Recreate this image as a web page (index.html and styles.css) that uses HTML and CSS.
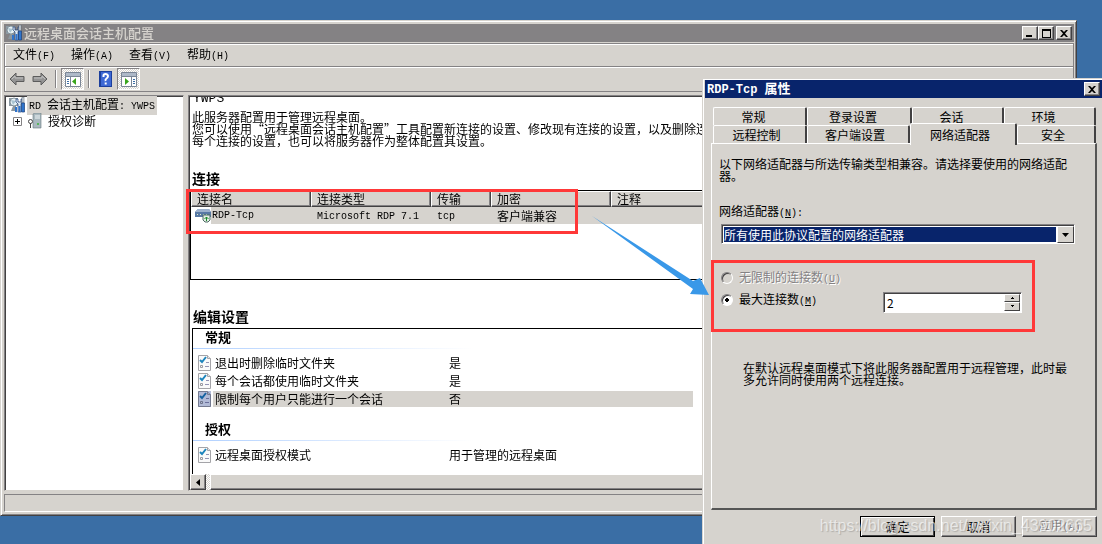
FILE: index.html
```html
<!DOCTYPE html>
<html lang="zh-CN">
<head>
    <meta charset="UTF-8">
    <meta name="viewport" content="width=device-width, initial-scale=1.0">
    <title>远程桌面会话主机配置</title>
    <link rel="stylesheet" href="styles.css">
</head>
<body>

    <!-- shared icons -->
    <svg class="defs" width="0" height="0">
        <symbol id="icon-host" viewBox="0 0 16 16">
            <path d="M0 1h9v8H0z" fill="#8d9aa3"/>
            <circle cx="5" cy="5" r="4" fill="#e6f0f4" stroke="#6f7f89" stroke-width=".8"/>
            <path d="M2 3l5 1-3 4z" fill="#a9c4d2"/>
            <path d="M4 9l-2 5h5V9z" fill="#8c979f"/>
            <path d="M7 2v3l2 2v8h3V7l1-2V2h-1v3H9V2z" fill="#dfe9f2" stroke="#1c4178" stroke-width=".7"/>
            <path d="M13 0h2v6h-2z" fill="#d7dde2" stroke="#4a5a68" stroke-width=".5"/>
            <path d="M12.500 6h3v9h-3z" fill="#2f74cc" stroke="#1c4178" stroke-width=".7"/>
            <path d="M6 10h2v5H6zM9.500 9h2v6h-2z" fill="#2f74cc"/>
        </symbol>
        <symbol id="icon-check" viewBox="0 0 13 16">
            <path d="M.5 .5h9l3 3v12H.5z" fill="#fafafa" stroke="#a4a4a8"/>
            <path d="M9.500 .5v3h3" fill="#e4e4e8" stroke="#a4a4a8"/>
            <path d="M2 5l2 2 4-5" fill="none" stroke="#1c84bc" stroke-width="2"/>
            <path d="M8 7.500h3M7 11.500h4" stroke="#9494b4"/>
            <path d="M2.500 10.500h2v2h-2z" fill="none" stroke="#9a9aa0"/>
        </symbol>
        <symbol id="icon-arrow" viewBox="0 0 16 14">
            <path d="M1 7l6-6v3.500h8v5H7V13z" fill="#949494" stroke="#5c5c5c"/>
            <path d="M3 7l3-3v2h8" fill="none" stroke="#c0c0c0"/>
        </symbol>
        <symbol id="icon-close" viewBox="0 0 8 7">
            <path d="M0 0h2l2 2 2-2h2L5 3.500 8 7H6L4 5 2 7H0l3-3.500z"/>
        </symbol>
    </svg>

    <main class="desktop">
        <section class="window">
            <header class="titlebar inactive">
                <svg class="icon16"><use href="#icon-host"/></svg>
                <h1>远程桌面会话主机配置</h1>
                <div class="caption-buttons">
                    <button class="caption" aria-label="最小化"><svg width="8" height="7"><path d="M0 5h6v2H0z"/></svg></button>
                    <button class="caption" aria-label="最大化"><svg width="9" height="9"><path d="M0 0h9v9H0zM1 2v6h7V2z" fill-rule="evenodd"/></svg></button>
                    <button class="caption apart" aria-label="关闭"><svg width="8" height="7"><use href="#icon-close"/></svg></button>
                </div>
            </header>

            <nav class="menubar">
                <button>文件<span class="en">(F)</span></button>
                <button>操作<span class="en">(A)</span></button>
                <button>查看<span class="en">(V)</span></button>
                <button>帮助<span class="en">(H)</span></button>
            </nav>

            <div class="toolbar">
                <button aria-label="后退"><svg width="16" height="14"><use href="#icon-arrow"/></svg></button>
                <button aria-label="前进"><svg class="flip" width="16" height="14"><use href="#icon-arrow"/></svg></button>
                <i class="separator"></i>
                <button class="pressed" aria-label="显示控制台树">
                    <svg width="16" height="15"><path d="M.5 .5h15v14H.5z" fill="#fff" stroke="#7a8696"/><path d="M1 1h14v3H1z" fill="#aeb9c8"/><path d="M1 4.500h14M5.500 5v9" stroke="#7a8696"/><path d="M2 7.500h2M2 9.500h2M2 11.500h2" stroke="#3b6ea5"/><path d="M11 6v7L7 9.500z" fill="#39a51c"/></svg>
                </button>
                <i class="separator"></i>
                <button aria-label="帮助">
                    <svg width="13" height="16"><path d="M0 0h13v16H0z" fill="#1c3f9c"/><path d="M2 1h10v14H2z" fill="#3d68d4"/><path d="M4.500 6V4.500Q4.500 3 6.500 3T9 5Q9 6.500 7.500 7.500T6.700 10M6.700 11.500v2" fill="none" stroke="#fff" stroke-width="2"/></svg>
                </button>
                <button class="pressed" aria-label="显示操作窗格">
                    <svg width="16" height="15"><path d="M.5 .5h15v14H.5z" fill="#fff" stroke="#7a8696"/><path d="M1 1h14v3H1z" fill="#aeb9c8"/><path d="M1 4.500h14M10.500 5v9" stroke="#7a8696"/><path d="M12 7.500h2M12 9.500h2M12 11.500h2" stroke="#3b6ea5"/><path d="M4 6v7l4-3.500z" fill="#39a51c"/></svg>
                </button>
            </div>

            <div class="panes">
                <ul class="tree pane">
                    <li><svg class="icon16"><use href="#icon-host"/></svg><span class="node selected"><span class="en">RD </span>会话主机配置<span class="en">: YWPS</span></span></li>
                    <li class="child">
                        <button class="expander" aria-label="展开"><svg width="9" height="9"><path d="M.5 .5h8v8h-8z" fill="#fff" stroke="#848284"/><path d="M2 4.500h5M4.500 2v5" stroke="#000"/></svg></button>
                        <svg width="14" height="16"><path d="M5 1l2-1h6v15H5z" fill="#a9b8be" stroke="#66767e" stroke-width=".6"/><path d="M7 3h5M7 5h5" stroke="#eef4f6"/><circle cx="10" cy="11" r="1" fill="#3cb43c"/><circle cx="2.500" cy="8.500" r="2" fill="#fff" stroke="#444"/><path d="M2.500 10v5" stroke="#444"/></svg>
                        <span class="node">授权诊断</span>
                    </li>
                </ul>

                <div class="details pane">
                    <div class="content">
                        <div class="server en">YWPS</div>
                        <p>此服务器配置用于管理远程桌面。<br>您可以使用“远程桌面会话主机配置”工具配置新连接的设置、修改现有连接的设置，以及删除连接。<br>每个连接的设置，也可以将服务器作为整体配置其设置。</p>

                        <h2>连接</h2>
                        <div class="connections">
                            <table>
                                <thead>
                                    <tr><th class="wide">连接名</th><th class="wide">连接类型</th><th class="narrow">传输</th><th class="wide">加密</th><th>注释</th></tr>
                                </thead>
                                <tbody>
                                    <tr>
                                        <td class="name"><svg width="17" height="15"><path d="M0 4l3-3h11l2 3v5H0z" fill="#5878a4"/><path d="M0 4l3-3h11l2 3z" fill="#9cb0cc"/><path d="M2 6.500h11" stroke="#dff0c8" stroke-dasharray="1 2"/><path d="M8 7h7v5l-2 2h-3l-2-2z" fill="#e4ece4" stroke="#4c6c64"/><path d="M11.500 13V9M9.500 11l2-2 2 2" fill="none" stroke="#168c28"/></svg><span class="en">RDP-Tcp</span></td>
                                        <td><span class="en">Microsoft RDP 7.1</span></td>
                                        <td><span class="en">tcp</span></td>
                                        <td>客户端兼容</td>
                                        <td></td>
                                    </tr>
                                </tbody>
                            </table>
                        </div>

                        <h2 class="settings-title">编辑设置</h2>
                        <div class="settings">
                            <h3>常规</h3>
                            <dl>
                                <div><svg width="13" height="16"><use href="#icon-check"/></svg><dt>退出时删除临时文件夹</dt><dd>是</dd></div>
                                <div><svg width="13" height="16"><use href="#icon-check"/></svg><dt>每个会话都使用临时文件夹</dt><dd>是</dd></div>
                                <div class="selected"><svg width="13" height="16"><use href="#icon-check"/></svg><dt>限制每个用户只能进行一个会话</dt><dd>否</dd></div>
                            </dl>
                            <h3>授权</h3>
                            <dl>
                                <div><svg width="13" height="16"><use href="#icon-check"/></svg><dt>远程桌面授权模式</dt><dd>用于管理的远程桌面</dd></div>
                            </dl>
                        </div>
                    </div>
                    <div class="scrollbar">
                        <button aria-label="向左滚动"><svg width="4" height="7"><path d="M4 0v7L0 3.500z"/></svg></button>
                        <div class="thumb"></div>
                    </div>
                </div>
            </div>

            <footer class="statusbar"></footer>
        </section>

        <section class="dialog">
            <header class="titlebar">
                <h1><span class="en">RDP-Tcp </span>属性</h1>
                <div class="caption-buttons">
                    <button class="caption" aria-label="关闭"><svg width="8" height="7"><use href="#icon-close"/></svg></button>
                </div>
            </header>

            <div class="tabs">
                <div class="tab-row">
                    <button>常规</button><button>登录设置</button><button>会话</button><button>环境</button>
                </div>
                <div class="tab-row second">
                    <button>远程控制</button><button>客户端设置</button><button class="active">网络适配器</button><button>安全</button>
                </div>
            </div>

            <form class="sheet" id="adapter-form">
                <p>以下网络适配器与所选传输类型相兼容。请选择要使用的网络适配器。</p>
                <label class="adapter-label" for="adapter">网络适配器<span class="en">(<u>N</u>):</span></label>
                <div class="combo">
                    <select id="adapter"><option>所有使用此协议配置的网络适配器</option></select>
                    <span class="drop"><svg width="7" height="4"><path d="M0 0h7L3.500 4z"/></svg></span>
                </div>
                <div class="limits">
                    <div class="choice disabled">
                        <input type="radio" name="limit" id="unlimited" disabled>
                        <label for="unlimited">无限制的连接数<span class="en">(<u>U</u>)</span></label>
                    </div>
                    <div class="choice">
                        <input type="radio" name="limit" id="maximum" checked>
                        <label for="maximum">最大连接数<span class="en">(<u>M</u>)</span></label>
                        <div class="spinner">
                            <input type="text" value="2" aria-label="最大连接数">
                            <div class="steps">
                                <button type="button" aria-label="增加"><svg width="3" height="2"><path d="M1 0h1v1h1v1H0V1h1z"/></svg></button>
                                <button type="button" aria-label="减少"><svg width="3" height="2"><path d="M0 0h3v1H2v1H1V1H0z"/></svg></button>
                            </div>
                        </div>
                    </div>
                </div>
                <p class="note">在默认远程桌面模式下将此服务器配置用于远程管理，此时最多允许同时使用两个远程连接。</p>
            </form>

            <div class="actions">
                <button class="default">确定</button>
                <button>取消</button>
                <button disabled>应用<span class="en">(A)</span></button>
            </div>
            <div class="mark mark-limit"></div>
            <svg class="pointer" width="120" height="82"><path d="M0 0l101 65 7-3 9 17-19-1 3-5z" fill="#3998e8"/></svg>
            <div class="watermark">https://blog.csdn.net/weixin_43902665</div>
        </section>

        <div class="mark mark-connection"></div>
    </main>

</body>
</html>
```
FILE: styles.css
```css
* {
    box-sizing: border-box;
}
body {
    margin: 0;
    background: #3a6ea5;
    color: #000;
    font: 12px/12px "Noto Sans CJK SC", sans-serif;
}
h1, h2, h3, p, ul, dl, dd {
    margin: 0;
    padding: 0;
}
svg {
    display: block;
    flex: none;
}
button, input, select {
    font: inherit;
    color: inherit;
    margin: 0;
    padding: 0;
    border: 0;
    border-radius: 0;
    background: none;
}
.defs {
    position: absolute;
}
.en {
    font-family: "Liberation Mono", monospace;
    font-size: 10px;
    white-space: pre;
}
.icon16 {
    width: 16px;
    height: 16px;
}
.desktop {
    position: relative;
    min-height: 100vh;
    padding: 20px 25px 29px 0;
    display: flex;
    overflow: hidden;
}

/* main window */
.window {
    flex: 1;
    min-width: 0;
    display: flex;
    flex-direction: column;
    background: #d6d3ce;
    padding: 2px 2px 1px 3px;
    border: 1px solid #d6d3ce;
    border-right-color: #424142;
    border-bottom-color: #424142;
    box-shadow: inset 1px 1px #fff, inset -1px -1px #848284;
}
.titlebar {
    display: flex;
    align-items: center;
    height: 18px;
    padding: 0 2px;
    background: #08246b;
    color: #fff;
}
.titlebar.inactive {
    gap: 2px;
    margin-top: 1px;
    background: #848284;
    color: #d6d3ce;
}
.titlebar h1 {
    flex: 1;
    font-size: 13px;
    font-weight: 500;
}
.caption-buttons {
    display: flex;
}
.caption {
    display: flex;
    align-items: center;
    justify-content: center;
    width: 16px;
    height: 14px;
    background: #d6d3ce;
    border: 1px solid #fff;
    border-right-color: #424142;
    border-bottom-color: #424142;
    box-shadow: inset -1px -1px #848284;
}
.caption.apart {
    margin-left: 2px;
}
.menubar {
    display: flex;
    gap: 16px;
    height: 24px;
    margin-top: 1px;
    padding: 0 8px;
    border: 1px solid #848284;
    box-shadow: inset 1px 1px #fff;
}
.toolbar {
    display: flex;
    align-items: center;
    height: 25px;
    padding: 0 4px;
    border: 1px solid #848284;
    border-top: 0;
    box-shadow: inset 1px 1px #fff;
}
.toolbar button {
    display: flex;
    align-items: center;
    justify-content: center;
    width: 23px;
    height: 22px;
}
.toolbar button:first-child {
    width: 16px;
    margin-right: 3px;
}
.flip {
    transform: scaleX(-1);
}
.toolbar .pressed {
    border: 1px solid #848284;
    border-right-color: #fff;
    border-bottom-color: #fff;
    background: repeating-conic-gradient(#fff 0 25%, #d6d3ce 0 50%) 0 0 / 2px 2px;
}
.separator {
    width: 2px;
    height: 18px;
    margin: 0 4px;
    border-left: 1px solid #848284;
    border-right: 1px solid #fff;
}
.panes {
    flex: 1;
    display: flex;
    gap: 4px;
    min-height: 396px;
    margin-top: 3px;
}
.pane {
    background: #fff;
    border: 1px solid #848284;
    border-right-color: #d6d3ce;
    border-bottom-color: #d6d3ce;
    box-shadow: inset 1px 1px #424142;
}
.tree {
    width: 180px;
    padding: 1px 4px;
    list-style: none;
}
.tree li {
    display: flex;
    align-items: center;
    gap: 2px;
    height: 16px;
}
.tree .child {
    padding-left: 4px;
    gap: 4px;
}
.expander {
    margin-right: 2px;
}
.node {
    padding: 2px;
}
.selected {
    background: #d6d3ce;
}
.details {
    flex: 1;
    min-width: 0;
    display: flex;
    flex-direction: column;
    padding: 1px 0 0 1px;
}
.content {
    flex: 1;
    overflow: hidden;
    white-space: nowrap;
}
.server {
    height: 8px;
    margin: -2px 0 8px 3px;
    line-height: 8px;
    font-size: 13px;
}
.content p {
    margin-left: 2px;
}
.content h2 {
    margin: 24px 0 5px 2px;
    font-size: 14px;
    line-height: 14px;
}
.connections {
    height: 90px;
    border: 1px solid #000;
    border-right: 0;
}
.connections table {
    width: 100%;
    border-collapse: separate;
    border-spacing: 0;
    table-layout: fixed;
}
.connections th {
    height: 16px;
    padding: 0 5px;
    text-align: left;
    font-weight: normal;
    background: #d6d3ce;
    border: 1px solid #fff;
    border-right-color: #424142;
    border-bottom-color: #424142;
    box-shadow: inset -1px -1px #848284;
}
.wide {
    width: 120px;
}
.narrow {
    width: 60px;
}
.connections td {
    height: 17px;
    padding: 0 6px;
    background: #d6d3ce;
}
.connections .name {
    display: flex;
    align-items: center;
    padding: 0 4px;
    background: linear-gradient(90deg, #fff 20px, #d6d3ce 20px);
}
.content .settings-title {
    margin: 29px 0 5px 3px;
}
.settings {
    height: 146px;
    margin-left: 2px;
    border: 1px solid #000;
    border-width: 1px 0 0 1px;
}
.settings h3 {
    height: 20px;
    padding: 1px 12px 0;
    font-size: 13px;
    line-height: 13px;
    background: linear-gradient(90deg, #b0d0ff, #fff 280px) 0 100% / 100% 1px no-repeat;
}
.settings dl {
    padding: 5px 5px 13px;
}
.settings dl div {
    display: flex;
    align-items: center;
    gap: 4px;
    width: 495px;
    height: 18px;
}
.settings dt {
    width: 230px;
}
.settings .selected {
    background: linear-gradient(90deg, #b5bedb 13px, #fff 13px 15px, #d6d3ce 15px) 0 50% / 100% 16px no-repeat;
}
.settings .selected svg {
    mix-blend-mode: multiply;
}
.scrollbar {
    display: flex;
    gap: 4px;
    height: 16px;
    background: repeating-conic-gradient(#fff 0 25%, #d6d3ce 0 50%) 0 0 / 2px 2px;
}
.scrollbar button, .thumb {
    display: flex;
    align-items: center;
    justify-content: center;
    width: 16px;
    background: #d6d3ce;
    border: 1px solid #fff;
    border-right-color: #424142;
    border-bottom-color: #424142;
    box-shadow: inset -1px -1px #848284;
}
.scrollbar .thumb {
    flex: 1;
}
.statusbar {
    height: 18px;
    margin: 3px 0 2px;
    border: 1px solid #848284;
    border-right-color: #fff;
    border-bottom-color: #fff;
}

/* properties dialog */
.dialog {
    position: absolute;
    right: 0;
    bottom: 0;
    width: 400px;
    padding: 1px 0 7px 2px;
    background: #d6d3ce;
    border: 1px solid #d6d3ce;
    border-right: 0;
    border-bottom-color: #848284;
    box-shadow: inset 1px 1px #fff;
}
.dialog .titlebar h1 {
    font-weight: 700;
}
.dialog .titlebar .en {
    font-size: 12px;
}
.tabs {
    padding: 9px 6px 0 8px;
}
.tab-row {
    display: grid;
    grid-template-columns: 94px 105px 92px 1fr;
}
.tab-row.second {
    grid-template-columns: 94px 103px 107px 1fr;
}
.tab-row button {
    height: 18px;
    padding-right: 12px;
    border: 1px solid #fff;
    border-right: 2px solid #424142;
    border-bottom: 0;
    border-radius: 2px 2px 0 0;
}
.tab-row.second button {
    padding-right: 6px;
}
.tab-row .active {
    position: relative;
    height: 22px;
    margin: -2px 0 -2px;
    background: #d6d3ce;
}
.sheet {
    height: 367px;
    margin: 0 5px 0 6px;
    padding: 14px 7px;
    border: 1px solid #fff;
    border-right: 2px solid #555;
    border-bottom: 2px solid #555;
}
.sheet p {
    width: 348px;
}
.adapter-label {
    display: block;
    margin: 23px 0 4px;
}
.combo {
    position: relative;
    width: 354px;
    height: 20px;
    margin-left: 2px;
    padding: 1px;
    background: #fff;
    border: 1px solid #848284;
    border-right-color: #fff;
    border-bottom-color: #fff;
    box-shadow: inset 1px 1px #424142;
}
.combo select {
    appearance: none;
    width: 334px;
    height: 17px;
    background: #08246b;
    border: 1px solid #fff;
    color: #fff;
    line-height: 14px;
}
.drop {
    position: absolute;
    top: 1px;
    right: 0;
    display: flex;
    align-items: center;
    justify-content: center;
    width: 17px;
    height: 17px;
    pointer-events: none;
    background: #d6d3ce;
    border: 1px solid #fff;
    border-right-color: #424142;
    border-bottom-color: #424142;
}
.limits {
    margin: 23px 0 0 2px;
}
.choice {
    display: flex;
    align-items: center;
    height: 22px;
    gap: 6px;
}
.choice input[type="radio"] {
    appearance: none;
    width: 12px;
    height: 12px;
    border: 1px solid #848284;
    border-right-color: #fff;
    border-bottom-color: #fff;
    border-radius: 50%;
    background: #fff;
    box-shadow: inset 1px 1px #424142;
}
.choice input:checked {
    background: radial-gradient(#000 2px, #fff 2px);
}
.choice input:disabled {
    background: #d6d3ce;
}
.disabled {
    color: #848284;
    text-shadow: 1px 1px #fff;
}
.choice label {
    width: 138px;
}
.spinner {
    display: flex;
    width: 139px;
    height: 21px;
    margin-top: 4px;
    padding: 1px;
    background: #fff;
    border: 1px solid #848284;
    border-right-color: #fff;
    border-bottom-color: #fff;
    box-shadow: inset 1px 1px #424142;
}
.spinner input {
    flex: 1;
    min-width: 0;
    padding-left: 2px;
}
.steps {
    display: grid;
    grid-template-rows: 1fr 1fr;
    width: 16px;
}
.steps button {
    display: flex;
    align-items: center;
    justify-content: center;
    background: #d6d3ce;
    border: 1px solid #fff;
    border-right-color: #424142;
    border-bottom-color: #424142;
}
.sheet .note {
    width: 325px;
    margin: 51px 0 0 24px;
}
.actions {
    display: flex;
    justify-content: flex-end;
    gap: 6px;
    padding: 6px 5px 0;
}
.actions button {
    width: 75px;
    height: 21px;
    border: 1px solid #fff;
    border-right-color: #424142;
    border-bottom-color: #424142;
    box-shadow: inset -1px -1px #848284;
}
.actions .default {
    border-color: #000;
    box-shadow: inset 1px 1px #fff, inset -1px -1px #424142;
}
.actions button:disabled {
    color: #848284;
    text-shadow: 1px 1px #fff;
}

/* annotations over the windows */
.mark {
    position: absolute;
    border: 3px solid #ff3838;
    pointer-events: none;
}
.mark-connection {
    top: 189px;
    left: 186px;
    width: 392px;
    height: 45px;
}
.mark-limit {
    top: 181px;
    left: 8px;
    width: 324px;
    height: 72px;
}
.pointer {
    position: absolute;
    top: 137px;
    left: -111px;
    pointer-events: none;
}
.watermark {
    position: absolute;
    right: 10px;
    bottom: 8px;
    font: 16px/20px "Liberation Sans", Arial, sans-serif;
    color: rgba(255, 255, 255, 0.6);
    text-shadow: 1px 1px 1px rgba(90, 90, 90, 0.3);
    pointer-events: none;
}
```
